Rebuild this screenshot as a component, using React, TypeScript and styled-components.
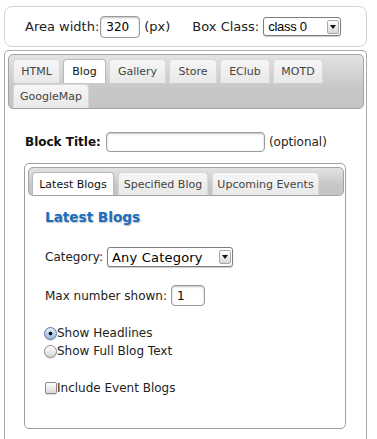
import React from 'react'
import styled, { createGlobalStyle } from 'styled-components'

const GlobalStyle = createGlobalStyle`
    body {
        margin: 0;
        background: #ffffff;
        font-family: "DejaVu Sans", Verdana, sans-serif;
        color: #222;
    }
`

const Page = styled.div`
    width: 377px;
    height: 439px;
    overflow: hidden;
    padding: 6px 0 0 4px;
    box-sizing: border-box;
`

const TopBox = styled.div`
    width: 363px;
    height: 41px;
    box-sizing: border-box;
    border: 1px solid #d2d2d2;
    border-radius: 8px;
    display: flex;
    align-items: center;
    padding-left: 20px;
    font-size: 13px;
    color: #222;
`

const Label = styled.span<{ gap?: number }>`
    margin-right: ${({ gap }) => gap ?? 4}px;
    white-space: nowrap;
`

const TextInput = styled.div<{ w: number; h?: number }>`
    width: ${({ w }) => w}px;
    height: ${({ h }) => h ?? 20}px;
    box-sizing: border-box;
    border: 1px solid #9a9a9a;
    border-radius: 4px;
    box-shadow: inset 0 1px 2px rgba(0, 0, 0, 0.25);
    background: #fff;
    display: flex;
    align-items: center;
    padding-left: 5px;
    font-size: 12px;
    color: #000;
    margin-right: 4px;
`

const Select = styled.div<{ w: number; h?: number; fs?: number }>`
    width: ${({ w }) => w}px;
    height: ${({ h }) => h ?? 19}px;
    box-sizing: border-box;
    border: 1px solid #7d7d7d;
    border-radius: 3px;
    box-shadow: 0 1px 1px rgba(0, 0, 0, 0.2);
    background: #fff;
    display: flex;
    align-items: center;
    justify-content: space-between;
    padding: 0 1px 0 4px;
    font-family: "Liberation Sans", Arial, sans-serif;
    font-size: ${({ fs }) => fs ?? 13}px;
    color: #000;
`

const SelectText = styled.span<{ verdana?: boolean }>`
    font-family: ${({ verdana }) => verdana ? '"DejaVu Sans", Verdana, sans-serif' : '"Liberation Sans", Arial, sans-serif'};
    letter-spacing: ${({ verdana }) => verdana ? '0.2px' : '-0.3px'};
`

const ArrowBox = styled.span`
    width: 12px;
    height: 14px;
    box-sizing: border-box;
    border: 1px solid #a8a8a8;
    border-radius: 2px;
    background: linear-gradient(#ffffff, #d8d8d8);
    display: flex;
    align-items: center;
    justify-content: center;
`

const MainPanel = styled.div`
    width: 363px;
    height: 420px;
    margin-top: 3px;
    box-sizing: border-box;
    border: 1px solid #a9a9a9;
    border-bottom: none;
    border-radius: 5px 5px 0 0;
    padding: 3px 2px 0 3px;
`

const TabBar = styled.div<{ small?: boolean }>`
    display: flex;
    flex-wrap: wrap;
    column-gap: ${({ small }) => small ? 4 : 3}px;
    row-gap: 1px;
    border: 1px solid #a3a3a3;
    border-radius: 5px;
    background: linear-gradient(#e3e3e3, #c8c8c8 60%, #c4c4c4);
    padding: ${({ small }) => small ? '4px 0 0 3px' : '4px 0 0 4px'};
`

const Tab = styled.div<{ active?: boolean; w: number; h?: number }>`
    width: ${({ w }) => w}px;
    height: ${({ h }) => h ?? 24}px;
    box-sizing: border-box;
    display: flex;
    align-items: center;
    justify-content: center;
    border: 1px solid ${({ active }) => active ? '#b8b8b8' : '#d8d8d8'};
    border-bottom: none;
    border-radius: 4px 4px 0 0;
    background: ${({ active }) => active ? '#ffffff' : 'linear-gradient(#f6f6f6, #e8e8e8)'};
    font-size: 11px;
    color: ${({ active }) => active ? '#111' : '#444'};
    white-space: nowrap;
`

const TitleRow = styled.div`
    display: flex;
    align-items: center;
    margin-top: 23px;
    padding-left: 17px;
    font-size: 12px;
`

const BoldLabel = styled.span`
    font-weight: bold;
    margin-right: 5px;
    color: #111;
`

const InnerBox = styled.div`
    width: 322px;
    height: 266px;
    box-sizing: border-box;
    margin: 11px 0 0 16px;
    border: 1px solid #9e9e9e;
    border-radius: 5px;
    padding: 3px 1px 0 3px;
`

const Content = styled.div`
    padding: 12px 0 0 17px;
    font-size: 12px;
    color: #222;
`

const Heading = styled.h2`
    margin: 0;
    font-size: 13.6px;
    line-height: 18px;
    font-weight: bold;
    color: #1b6fc0;
    text-shadow: 1px 1px 1px rgba(0, 0, 0, 0.25);
`

const FormRow = styled.div<{ top: number }>`
    display: flex;
    align-items: center;
    margin-top: ${({ top }) => top}px;
`

const OptionRow = styled.div<{ top?: number }>`
    display: flex;
    align-items: center;
    height: 18px;
    margin-top: ${({ top }) => top ?? 0}px;
    margin-left: -1px;
`

const Radio = styled.span<{ checked?: boolean }>`
    width: 13px;
    height: 13px;
    box-sizing: border-box;
    border-radius: 50%;
    border: 1px solid ${({ checked }) => checked ? '#5a7aa8' : '#8a8a8a'};
    background: ${({ checked }) => checked
        ? 'radial-gradient(circle at 50% 50%, #111 0 1.6px, transparent 2.2px), linear-gradient(#e2ecf8, #9ab8dc)'
        : 'linear-gradient(#ffffff, #d6d6d6)'};
    box-shadow: 0 1px 1px rgba(0, 0, 0, 0.15);
`

const Checkbox = styled.span`
    width: 12px;
    height: 12px;
    box-sizing: border-box;
    border-radius: 2px;
    border: 1px solid #8a8a8a;
    background: linear-gradient(#ffffff, #dadada);
    box-shadow: 0 1px 1px rgba(0, 0, 0, 0.15);
    margin-left: 1px;
`

const Arrow = () => (
    <svg width="6" height="4" viewBox="0 0 6 4">
        <path d="M0 0 L6 0 L3 4 Z" fill="#111" />
    </svg>
)

const mainTabs = [
    { title: 'HTML', w: 47 },
    { title: 'Blog', w: 43, active: true },
    { title: 'Gallery', w: 57 },
    { title: 'Store', w: 48 },
    { title: 'EClub', w: 50 },
    { title: 'MOTD', w: 50 },
    { title: 'GoogleMap', w: 76 },
]

const blogTabs = [
    { title: 'Latest Blogs', w: 82, active: true },
    { title: 'Specified Blog', w: 90 },
    { title: 'Upcoming Events', w: 107 },
]

const App: React.FunctionComponent = () => {
    return (
        <>
            <GlobalStyle />
            <Page>
                <TopBox>
                    <Label gap={1}>Area width:</Label>
                    <TextInput w={40} h={22}>320</TextInput>
                    <Label gap={22}>(px)</Label>
                    <Label gap={4}>Box Class:</Label>
                    <Select w={78} h={19}>
                        <SelectText>class 0</SelectText>
                        <ArrowBox><Arrow /></ArrowBox>
                    </Select>
                </TopBox>

                <MainPanel>
                    <TabBar>
                        {mainTabs.map((tab, index) => (
                            <Tab key={index} w={tab.w} active={tab.active}>{tab.title}</Tab>
                        ))}
                    </TabBar>

                    <TitleRow>
                        <BoldLabel>Block Title:</BoldLabel>
                        <TextInput w={159} />
                        <span>(optional)</span>
                    </TitleRow>

                    <InnerBox>
                        <TabBar small>
                            {blogTabs.map((tab, index) => (
                                <Tab key={index} w={tab.w} h={23} active={tab.active}>{tab.title}</Tab>
                            ))}
                        </TabBar>
                        <Content>
                            <Heading>Latest Blogs</Heading>
                            <FormRow top={21}>
                                <Label>Category:</Label>
                                <Select w={126} h={20}>
                                    <SelectText verdana>Any Category</SelectText>
                                    <ArrowBox><Arrow /></ArrowBox>
                                </Select>
                            </FormRow>
                            <FormRow top={18}>
                                <Label>Max number shown:</Label>
                                <TextInput w={34} h={21}>1</TextInput>
                            </FormRow>
                            <OptionRow top={18}>
                                <Radio checked />
                                <span>Show Headlines</span>
                            </OptionRow>
                            <OptionRow>
                                <Radio />
                                <span>Show Full Blog Text</span>
                            </OptionRow>
                            <OptionRow top={19}>
                                <Checkbox />
                                <span>Include Event Blogs</span>
                            </OptionRow>
                        </Content>
                    </InnerBox>
                </MainPanel>
            </Page>
        </>
    )
}

export default App
